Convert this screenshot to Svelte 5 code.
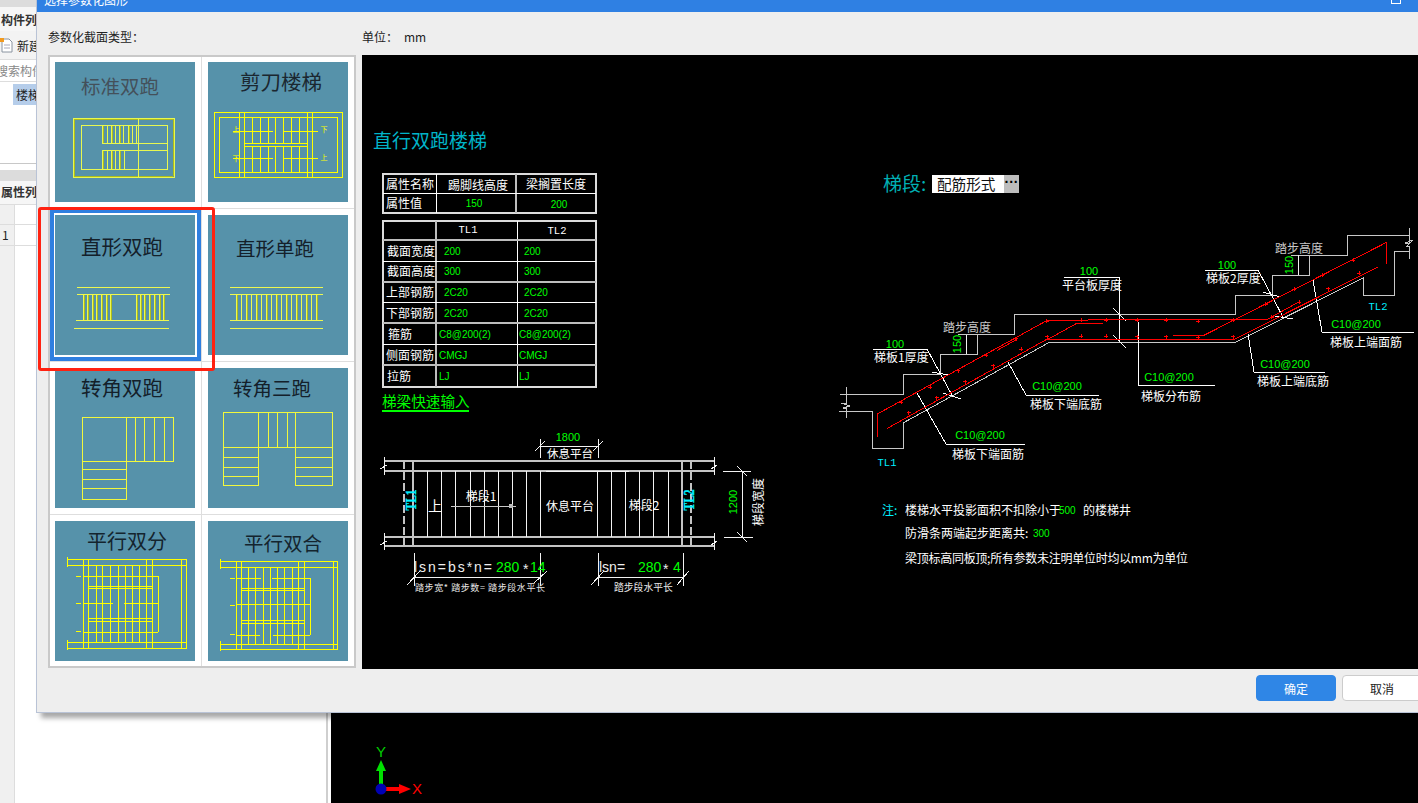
<script lang="ts">
  type Seg = number[];
  interface Thumb {
    title: string;
    tx: number;
    ty: number;
    size: number;
    ink: string;
    stroke: string;
    rects: Seg[];
    lines: Seg[];
    shade?: Seg[];
    marks?: { x: number; y: number; t: string }[];
  }

  const range = (from: number, to: number, step: number) => {
    const out: number[] = [];
    for (let v = from; v <= to + 0.01; v += step) out.push(v);
    return out;
  };
  const vs = (xs: number[], y1: number, y2: number): Seg[] => xs.map((x) => [x, y1, x, y2]);
  const hs = (ys: number[], x1: number, x2: number): Seg[] => ys.map((y) => [x1, y, x2, y]);

  const flightL = [28, 32, 37, 41, 46, 51, 55];
  const flightR = [81, 85, 89, 94, 99, 104, 108];

  const thumbs: Thumb[] = [
    {
      title: "标准双跑", tx: 26, ty: 23, size: 19.5, ink: "#44505a", stroke: "#e8f850",
      rects: [[18, 56, 101, 59], [26, 63, 86, 44]],
      shade: [
        [19, 57, 118, 57], [19, 114, 118, 114], [19, 57, 19, 114], [118, 57, 118, 114],
        ...vs([48, 57, 65, 74], 63, 81),
        ...vs([48, 57, 65], 88, 107)
      ],
      lines: [
        ...vs([47, 52, 56, 60, 64, 68, 73, 77, 81], 63, 81),
        ...vs([47, 52, 56, 60, 64, 69], 88, 107),
        [83, 56, 83, 115],
        ...hs([81, 88], 47, 112)
      ]
    },
    {
      title: "剪刀楼梯", tx: 32, ty: 19, size: 20.5, ink: "#1b2730", stroke: "#ffff00",
      rects: [[6, 50, 128, 65], [11, 55, 118, 55]],
      lines: [
        ...vs([31, 36, 99, 104], 50, 115),
        ...vs([44, 52, 60, 67, 75, 83, 91], 55, 81),
        ...vs([44, 52, 60, 67, 75, 83, 91], 84, 110),
        ...hs([81, 84], 36, 99),
        ...hs([69, 96], 25, 65),
        ...hs([69, 96], 75, 110)
      ],
      marks: [
        { x: 28, y: 67, t: "上" }, { x: 116, y: 67, t: "下" },
        { x: 28, y: 96, t: "下" }, { x: 116, y: 95, t: "上" }
      ]
    },
    {
      title: "直形双跑", tx: 26, ty: 31, size: 20.5, ink: "#14202a", stroke: "#eef850",
      rects: [],
      shade: [...vs(flightL, 79, 105).map((s) => [s[0] + 1, s[1], s[2] + 1, s[3]]), ...vs(flightR, 79, 105).map((s) => [s[0] + 1, s[1], s[2] + 1, s[3]])],
      lines: [
        ...hs([72, 79], 22, 115),
        [21, 105, 114, 105], [19, 113, 114, 113],
        ...vs(flightL, 79, 105),
        ...vs(flightR, 79, 105)
      ]
    },
    {
      title: "直形单跑", tx: 28, ty: 32, size: 19.5, ink: "#14202a", stroke: "#eef850",
      rects: [],
      shade: vs(range(29, 109, 10), 79, 105),
      lines: [...hs([72, 79, 105, 113], 22, 115), ...vs(range(28, 108, 5), 79, 105)]
    },
    {
      title: "转角双跑", tx: 26, ty: 19, size: 20.5, ink: "#14202a", stroke: "#f2f83c",
      rects: [[27, 49, 91, 44], [27, 93, 44, 38]],
      lines: [...vs([71, 80, 89, 99, 109], 49, 93), ...hs([101, 111, 120], 27, 71)]
    },
    {
      title: "转角三跑", tx: 25, ty: 19, size: 19.5, ink: "#14202a", stroke: "#f2f83c",
      rects: [[15, 44, 109, 35], [15, 79, 35, 38], [87, 79, 37, 38]],
      lines: [...vs([50, 60, 69, 79, 87], 44, 79), ...hs([89, 99, 108], 15, 50), ...hs([89, 99, 108], 87, 124)]
    },
    {
      title: "平行双分", tx: 32, ty: 19, size: 20, ink: "#14242e", stroke: "#ffff00",
      rects: [[12, 38, 119, 6], [12, 121, 119, 6]],
      lines: [
        ...vs([28, 33, 91, 97, 126, 131], 38, 127),
        ...vs([41, 47, 55, 63, 70, 77, 84], 44, 121),
        ...hs([55, 111], 28, 103),
        [103, 55, 103, 111],
        ...hs([65, 67, 97, 100], 33, 97),
        [28, 82, 58, 82], [69, 82, 103, 82],
        [21, 55, 26, 55], [21, 82, 26, 82], [21, 110, 26, 110],
        [12, 36, 12, 46], [12, 119, 12, 129]
      ]
    },
    {
      title: "平行双合", tx: 36, ty: 21, size: 19.5, ink: "#14242e", stroke: "#ffff00",
      rects: [[12, 40, 117, 6], [12, 123, 117, 5]],
      lines: [
        ...vs([28, 33, 90, 96, 125, 129], 40, 128),
        ...vs([40, 47, 55, 62, 69, 76, 84], 46, 123),
        [28, 57, 53, 57], [64, 57, 102, 57], [28, 114, 52, 114], [65, 114, 102, 114],
        [102, 57, 102, 114],
        ...hs([67, 69, 99, 102], 33, 96),
        [28, 83, 102, 83],
        [22, 57, 27, 57], [22, 84, 27, 84], [22, 113, 27, 113],
        [12, 38, 12, 48], [12, 120, 12, 130]
      ]
    }
  ];

  const fromZoom5 = (pts: number[]) => pts.map((v, i) => (i % 2 ? 160 + v / 3 : 830 + v / 3)).join(",");
  const fromZoom6 = (pts: number[]) => pts.map((v, i) => (i % 2 ? 210 + v / 3 : 1120 + v / 3)).join(",");

  // section outline, grey
  const outline = [
    "840,394 903,394 903,374 940,374 940,354 977,354 977,334 1014,334 1014,314 1235,314 1235,295 1272,295 1272,275 1309,275 1309,255 1347,255 1347,235 1410,235",
    "839,411 872,411 872,448 903,448 903,423 1050,342 1236,342 1363,278 1363,295 1394,295 1394,251 1410,251",
    "846,387 846,403 841,403 850,406 843,408 846,408 846,418",
    "1409,228 1409,243 1405,243 1413,240 1407,246 1409,246 1409,259",
    "958,334 977,334",
    "1291,255 1309,255"
  ];

  const rebar = [
    fromZoom5([142, 830, 142, 762, 650, 482, 900, 478]),
    "1130,319 1268,319 1297,303",
    fromZoom5([172, 805, 650, 538, 900, 538]),
    "1130,339 1235,339 1378,267",
    fromZoom5([500, 572, 560, 538]),
    fromZoom5([650, 540, 740, 490, 820, 490]),
    fromZoom6([160, 377, 250, 377, 800, 97, 800, 163])
  ];

  const rebarDots = [
    ...[213, 727, 300, 682, 385, 632, 468, 585, 558, 536, 650, 483, 754, 481, 828, 481, 236, 758, 320, 713, 406, 665, 490, 617, 574, 568, 652, 530, 754, 529, 828, 529]
      .reduce((acc: number[][], v, i, a) => (i % 2 ? acc : [...acc, [830 + v / 3, 160 + a[i + 1] / 3]]), []),
    ...[52, 331, 139, 331, 235, 334, 340, 330, 437, 283, 523, 238, 607, 196, 700, 150, 52, 380, 139, 380, 235, 382, 340, 380, 455, 322, 538, 277, 625, 236, 717, 190]
      .reduce((acc: number[][], v, i, a) => (i % 2 ? acc : [...acc, [1120 + v / 3, 210 + a[i + 1] / 3]]), [])
  ];

  const leaders = [
    "873,349 927,349 953,397",
    "932,372 948,375",
    "943,393 961,399",
    "1008,362 1026,395 1099,395",
    "917,393 946,444 1025,444",
    "1064,277 1119,277 1119,342",
    "1113,308 1126,321",
    "1113,335 1126,348",
    "1138,322 1138,385 1215,385",
    "1248,334 1254,372 1325,372",
    "1313,280 1322,332 1414,332",
    "1205,270 1258,270 1283,317",
    "1263,292 1280,297",
    "1275,316 1293,319"
  ];

  const planLong = [461, 471, 537, 546];
  const planTreads = [427, 441, 455, 470, 484, 498, 512, 526, 540, 597, 611, 625, 639, 653, 668];
  const planTicks = [
    [384, 457, 384, 475], [380, 469, 387, 465], [384, 533, 384, 550], [380, 545, 387, 541],
    [714, 457, 714, 475], [711, 469, 717, 465], [714, 533, 714, 550], [711, 545, 717, 541],
    [540, 439, 540, 458], [598, 439, 598, 458], [540, 446, 598, 446],
    [535, 451, 545, 441], [593, 451, 603, 441],
    [723, 471, 751, 471], [724, 537, 753, 537], [742, 471, 742, 537],
    [737, 466, 747, 476], [737, 532, 747, 542],
    [414, 553, 414, 586], [540, 553, 540, 586], [414, 577, 540, 577],
    [407, 585, 420, 571], [534, 583, 547, 571],
    [598, 553, 598, 586], [683, 553, 683, 586], [598, 577, 683, 577],
    [591, 585, 604, 571], [677, 585, 689, 571]
  ];

  const attrRows = [
    { y: 251, label: "截面宽度", lx: 387, a: "200", b: "200", vx: 5 },
    { y: 271, label: "截面高度", lx: 387, a: "300", b: "300", vx: 5 },
    { y: 292, label: "上部钢筋", lx: 386, a: "2C20", b: "2C20", vx: 5 },
    { y: 313, label: "下部钢筋", lx: 386, a: "2C20", b: "2C20", vx: 5 },
    { y: 334, label: "箍筋", lx: 388, a: "C8@200(2)", b: "C8@200(2)", vx: 0 },
    { y: 355, label: "侧面钢筋", lx: 386, a: "CMGJ", b: "CMGJ", vx: 0 },
    { y: 376, label: "拉筋", lx: 387, a: "LJ", b: "LJ", vx: 0 }
  ];

  const labels = [
    { x: 874, y: 356, t: "梯板1厚度" },
    { x: 1030, y: 403, t: "梯板下端底筋" },
    { x: 952, y: 453, t: "梯板下端面筋" },
    { x: 1062, y: 284, t: "平台板厚度" },
    { x: 1141, y: 395, t: "梯板分布筋" },
    { x: 1257, y: 380, t: "梯板上端底筋" },
    { x: 1330, y: 341, t: "梯板上端面筋" },
    { x: 1206, y: 277, t: "梯板2厚度" }
  ];

  const greens = [
    { x: 895, y: 344, t: "100" },
    { x: 1089, y: 271, t: "100" },
    { x: 1227, y: 265, t: "100" },
    { x: 1057, y: 386, t: "C10@200" },
    { x: 980, y: 435, t: "C10@200" },
    { x: 1169, y: 377, t: "C10@200" },
    { x: 1285, y: 364, t: "C10@200" },
    { x: 1356, y: 324, t: "C10@200" }
  ];
</script>

<div class="app">
  <aside class="side">
    <div class="band"></div>
    <div class="panel-title">构件列</div>
    <div class="tool">
      <svg width="14" height="15" viewBox="0 0 14 15">
        <path d="M2 1h7l3 3v10H2z" fill="#fff" stroke="#8a94a0" />
        <path d="M4 7h6M4 10h6" stroke="#aab" />
        <rect x="0" y="0" width="4" height="4" fill="#f29a1f" />
      </svg>
      <span>新建</span>
    </div>
    <div class="search">搜索构件</div>
    <div class="tree">
      <div class="tree-item">楼梯</div>
    </div>
    <div class="band grey"></div>
    <div class="panel-title second">属性列</div>
    <div class="attrs">
      <div class="attr-row"><span class="idx"></span><span class="val"></span></div>
      <div class="attr-row"><span class="idx">1</span><span class="val"></span></div>
      <div class="attr-fill"><span class="idx"></span></div>
    </div>
  </aside>

  <main class="canvas">
    <svg class="axes" width="70" height="60" viewBox="361 743 70 60">
      <rect x="379" y="768" width="4" height="20" fill="#00e000" />
      <path d="M381 760l5 11h-10z" fill="#00e000" />
      <rect x="385" y="787" width="16" height="4" fill="#f00" />
      <path d="M411 789l-12-5v10z" fill="#f00" />
      <circle cx="381" cy="789" r="5.5" fill="#0000b4" />
      <text class="axis-label" x="381" y="757" fill="#00d000" text-anchor="middle">Y</text>
      <text class="axis-label" x="417" y="794" fill="#f00" text-anchor="middle">X</text>
    </svg>
  </main>

  <section class="dialog">
    <header class="dialog-head">
      <span>选择参数化图形</span>
      <span class="win-btn"></span>
    </header>

    <div class="meta">
      <span class="meta-type">参数化截面类型：</span>
      <span class="meta-unit">单位：</span>
      <span>mm</span>
    </div>

    <div class="body">
      <div class="grid">
        {#each thumbs as th, i}
          <div class="cell" class:selected={i === 2}>
            <svg class="thumb" width="140" height="140" viewBox="0 0 140 140" shape-rendering="crispEdges">
              <text class="thumb-title" x={th.tx} y={th.ty} font-size={th.size} fill={th.ink} dominant-baseline="central">{th.title}</text>
              {#each th.shade ?? [] as l}
                <line x1={l[0]} y1={l[1]} x2={l[2]} y2={l[3]} stroke="#aebc1c" />
              {/each}
              {#each th.rects as r}
                <rect x={r[0]} y={r[1]} width={r[2]} height={r[3]} fill="none" stroke={th.stroke} />
              {/each}
              {#each th.lines as l}
                <line x1={l[0]} y1={l[1]} x2={l[2]} y2={l[3]} stroke={th.stroke} />
              {/each}
              {#each th.marks ?? [] as m}
                <text class="thumb-mark" x={m.x} y={m.y} fill={th.stroke} text-anchor="middle" dominant-baseline="central">{m.t}</text>
              {/each}
            </svg>
          </div>
        {/each}
      </div>

      <svg class="cad" width="1070" height="614" viewBox="362 55 1070 614" shape-rendering="crispEdges">
        <text class="zh title" x="373" y="139" dominant-baseline="central">直行双跑楼梯</text>

        <!-- property table -->
        <rect class="tb-outer" x="383" y="174" width="213" height="39" />
        <line class="tb" x1="436" y1="174" x2="436" y2="213" />
        <line class="tb-g" x1="516" y1="174" x2="516" y2="213" />
        <line class="tb" x1="383" y1="193" x2="596" y2="193" />
        <text class="zh w12" x="386" y="183" dominant-baseline="central">属性名称</text>
        <text class="zh w12" x="478" y="184" text-anchor="middle" dominant-baseline="central">踢脚线高度</text>
        <text class="zh w12" x="556" y="183" text-anchor="middle" dominant-baseline="central">梁搁置长度</text>
        <text class="zh w12" x="386" y="202" dominant-baseline="central">属性值</text>
        <text class="num" x="474" y="203" text-anchor="middle" dominant-baseline="central">150</text>
        <text class="num" x="559" y="204" text-anchor="middle" dominant-baseline="central">200</text>

        <!-- beam table -->
        <rect class="tb-outer" x="383" y="221" width="213" height="166" />
        <line class="tb-g" x1="436" y1="221" x2="436" y2="387" />
        <line class="tb" x1="517" y1="221" x2="517" y2="387" />
        {#each [240, 261, 282, 302, 323, 344, 365] as y, i}
          <line class={i % 2 ? "tb" : "tb-g"} x1="383" y1={y} x2="596" y2={y} />
        {/each}
        <text class="mono" x="468" y="230" text-anchor="middle" dominant-baseline="central">TL1</text>
        <text class="mono" x="557" y="231" text-anchor="middle" dominant-baseline="central">TL2</text>
        {#each attrRows as r}
          <text class="zh w12" x={r.lx} y={r.y - 1} dominant-baseline="central">{r.label}</text>
          <text class="num" x={439 + r.vx} y={r.y} dominant-baseline="central">{r.a}</text>
          <text class="num" x={519 + r.vx} y={r.y} dominant-baseline="central">{r.b}</text>
        {/each}
        <text class="zh link" x="382" y="400" dominant-baseline="central">梯梁快速输入</text>
        <rect x="382" y="410" width="87" height="2" fill="#0f0" />

        <!-- plan view -->
        {#each planLong as y}
          <line class="plan" x1="384" y1={y} x2="714" y2={y} />
        {/each}
        <line class="plan" x1="413" y1="461" x2="413" y2="546" />
        <line class="plan" x1="682" y1="461" x2="682" y2="546" />
        <line class="plan dash" x1="404" y1="461" x2="404" y2="546" />
        <line class="plan dash" x1="691" y1="461" x2="691" y2="546" />
        <line class="thin" x1="546" y1="471" x2="629" y2="471" />
        {#each planTreads as x}
          <line class="thin" x1={x} y1="471" x2={x} y2="537" />
        {/each}
        {#each planTicks as t}
          <line class="thin" x1={t[0]} y1={t[1]} x2={t[2]} y2={t[3]} />
        {/each}
        <line class="grey" x1="451" y1="506" x2="516" y2="506" />
        <rect x="509" y="504" width="4" height="4" fill="#bbb" />
        <text class="num big" x="568" y="437" text-anchor="middle" dominant-baseline="central">1800</text>
        <text class="zh w11" x="570" y="453" text-anchor="middle" dominant-baseline="central">休息平台</text>
        <text class="zh w12" x="570" y="505" text-anchor="middle" dominant-baseline="central">休息平台</text>
        <text class="zh w13" x="435" y="505" text-anchor="middle" dominant-baseline="central">上</text>
        <text class="zh w12" x="481" y="495" text-anchor="middle" dominant-baseline="central">梯段1</text>
        <text class="zh w12" x="644" y="504" text-anchor="middle" dominant-baseline="central">梯段2</text>
        <text class="tl" x="411" y="500" text-anchor="middle" dominant-baseline="central" textLength="21" lengthAdjust="spacingAndGlyphs" transform="rotate(-90 411 500)">TL1</text>
        <text class="tl" x="689" y="500" text-anchor="middle" dominant-baseline="central" textLength="21" lengthAdjust="spacingAndGlyphs" transform="rotate(-90 689 500)">TL2</text>
        <text class="num big" x="733" y="502" text-anchor="middle" dominant-baseline="central" transform="rotate(-90 733 502)">1200</text>
        <text class="zh w12" x="757" y="502" text-anchor="middle" dominant-baseline="central" transform="rotate(-90 757 502)">梯段宽度</text>

        <text class="formula" x="414" y="567" dominant-baseline="central" textLength="78">lsn=bs*n=</text>
        <text class="formula g" x="496" y="567" dominant-baseline="central">280</text>
        <text class="formula" x="523" y="569" dominant-baseline="central">*</text>
        <text class="formula g" x="530" y="567" dominant-baseline="central">14</text>
        <text class="formula" x="599" y="567" dominant-baseline="central">lsn=</text>
        <text class="formula g" x="638" y="567" dominant-baseline="central">280</text>
        <text class="formula" x="663" y="569" dominant-baseline="central">*</text>
        <text class="formula g" x="673" y="567" dominant-baseline="central">4</text>
        <text class="zh w9" x="415" y="587" dominant-baseline="central" textLength="130">踏步宽* 踏步数= 踏步段水平长</text>
        <text class="zh w10" x="614" y="587" dominant-baseline="central">踏步段水平长</text>

        <!-- section view -->
        <text class="zh title small" x="883" y="182" dominant-baseline="central">梯段:</text>
        <rect x="932" y="175" width="87" height="18" fill="#fff" />
        <text class="zh combo" x="937" y="183" dominant-baseline="central">配筋形式</text>
        <rect x="1004" y="175" width="15" height="18" fill="#bdbdbd" />
        <text class="dots" x="1011.5" y="182" text-anchor="middle" dominant-baseline="central">···</text>

        {#each outline as p}
          <polyline class="grey" points={p} />
        {/each}
        {#each leaders as p}
          <polyline class="thin white" points={p} />
        {/each}
        {#each rebar as p}
          <polyline class="red" points={p} />
        {/each}
        {#each rebarDots as d}
          <path class="red" d="M{d[0] - 2} {d[1]}h4M{d[0]} {d[1] - 2}v4" />
        {/each}
        <line class="thin" x1="966" y1="335" x2="966" y2="354" />
        <line class="thin" x1="1298" y1="255" x2="1298" y2="275" />
        <text class="zh gr12" x="943" y="326" dominant-baseline="central">踏步高度</text>
        <text class="zh gr12" x="1275" y="247" dominant-baseline="central">踏步高度</text>
        <text class="num big" x="957" y="344" text-anchor="middle" dominant-baseline="central" transform="rotate(-90 957 344)">150</text>
        <text class="num big" x="1289" y="265" text-anchor="middle" dominant-baseline="central" transform="rotate(-90 1289 265)">150</text>
        {#each labels as l}
          <text class="zh w12" x={l.x} y={l.y} dominant-baseline="central">{l.t}</text>
        {/each}
        {#each greens as g}
          <text class="num big" x={g.x} y={g.y} text-anchor="middle" dominant-baseline="central">{g.t}</text>
        {/each}
        <text class="mono cy" x="887" y="463" text-anchor="middle" dominant-baseline="central">TL1</text>
        <text class="mono cy" x="1378" y="307" text-anchor="middle" dominant-baseline="central">TL2</text>

        <!-- notes -->
        <text class="zh note cy" x="882" y="509" dominant-baseline="central">注:</text>
        <text class="zh note" x="905" y="509" dominant-baseline="central">楼梯水平投影面积不扣除小于</text>
        <text class="num" x="1059" y="510" dominant-baseline="central">500</text>
        <text class="zh note" x="1083" y="509" dominant-baseline="central">的楼梯井</text>
        <text class="zh note" x="905" y="532" dominant-baseline="central">防滑条两端起步距离共:</text>
        <text class="num" x="1033" y="533" dominant-baseline="central">300</text>
        <text class="zh note" x="905" y="557" dominant-baseline="central" textLength="283">梁顶标高同板顶;所有参数未注明单位时均以mm为单位</text>
      </svg>
    </div>

    <footer class="foot">
      <button class="btn primary">确定</button>
      <button class="btn">取消</button>
    </footer>
  </section>

  <div class="annotation"></div>
</div>

<style>
  :global(body) {
    overflow: hidden;
    background: #fff;
  }

  .app {
    position: relative;
    display: flex;
    width: 1418px;
    height: 803px;
    overflow: hidden;
    font-family: "Noto Sans CJK SC", "Liberation Sans", sans-serif;
    font-size: 12px;
    color: #222;
  }

  .side {
    display: flex;
    flex-direction: column;
    width: 328px;
    margin-right: 3px;
    border-right: 2px solid #cfcfcf;
    box-sizing: border-box;
    background: #fff;
  }

  .band {
    height: 7px;
    background: #dcdcdc;
  }

  .band.grey {
    flex: none;
    height: 11px;
    margin-top: 6px;
  }

  .panel-title {
    height: 24px;
    line-height: 26px;
    padding-left: 1px;
    font-weight: 700;
    background: #f6f6f6;
    color: #333;
    white-space: nowrap;
  }

  .panel-title.second {
    height: 23px;
    line-height: 22px;
  }

  .tool {
    display: flex;
    align-items: center;
    gap: 3px;
    height: 28px;
    background: #f3f3f3;
  }

  .search {
    height: 21px;
    line-height: 21px;
    border-top: 1px solid #ddd;
    border-bottom: 1px solid #ddd;
    color: #888;
    text-indent: -4px;
    white-space: nowrap;
  }

  .tree {
    flex: none;
    height: 82px;
    padding: 2px 0 0 13px;
    border-bottom: 1px solid #c8c8c8;
    box-sizing: border-box;
  }

  .tree-item {
    height: 21px;
    line-height: 21px;
    padding-left: 3px;
    background: #b5cdea;
  }

  .attrs {
    display: flex;
    flex: 1;
    flex-direction: column;
  }

  .attr-row {
    display: flex;
    height: 20px;
    border-top: 1px solid #ddd;
    line-height: 20px;
  }

  .attr-row:first-child {
    height: 19px;
  }

  .attr-fill {
    display: flex;
    flex: 1;
    border-top: 1px solid #ddd;
  }

  .idx {
    width: 15px;
    background: #f0f0f0;
    border-right: 1px solid #ddd;
    box-sizing: border-box;
    padding-left: 2px;
  }

  .canvas {
    display: flex;
    flex: 1;
    align-items: flex-end;
    padding-left: 30px;
    background: #000;
  }

  .axis-label {
    font-family: "Liberation Sans", sans-serif;
    font-size: 15px;
  }

  .dialog {
    position: absolute;
    top: -20px;
    left: 36px;
    width: 1396px;
    height: 733px;
    border-left: 1px solid #b9c3d6;
    border-bottom: 1px solid #b9c3d6;
    background: #eee;
    box-shadow: 5px 5px 5px rgba(0, 0, 0, 0.35);
    box-sizing: border-box;
  }

  .dialog-head {
    display: flex;
    justify-content: space-between;
    height: 32px;
    padding: 10px 31px 0 7px;
    box-sizing: border-box;
    background: #2f80e3;
    color: #fff;
    line-height: 20px;
  }

  .win-btn {
    width: 8px;
    height: 8px;
    margin-top: 4px;
    border: 1px solid #fff;
  }

  .meta {
    display: flex;
    align-items: center;
    height: 43px;
    padding: 6px 0 0 11px;
    box-sizing: border-box;
  }

  .meta-type {
    width: 314px;
  }

  .meta-unit {
    width: 42px;
  }

  .body {
    display: flex;
    gap: 6px;
    height: 614px;
    padding-left: 11px;
  }

  .grid {
    display: grid;
    grid-template-columns: 151px 152px;
    grid-template-rows: 151px 152px 152px 151px;
    gap: 1px;
    flex: none;
    height: 613px;
    width: 308px;
    border: 2px solid #c9c9c9;
    box-sizing: border-box;
    background: #dedede;
  }

  .cell {
    padding: 6px;
    background: #fff;
    box-sizing: border-box;
  }

  .cell:nth-child(odd) {
    padding-left: 5px;
  }

  .cell:nth-child(-n + 2) {
    padding-top: 5px;
  }

  .cell.selected {
    box-shadow: inset 0 0 0 4px #2f7fe0;
  }

  .thumb {
    display: block;
    background: #5692aa;
  }

  .thumb-title {
    font-family: "Noto Sans CJK SC", sans-serif;
  }

  .thumb-mark {
    font-family: "Noto Sans CJK SC", sans-serif;
    font-size: 7px;
  }

  .cad {
    flex: none;
    display: block;
    background: #000;
  }

  .zh {
    font-family: "Noto Sans CJK SC", sans-serif;
  }

  .title {
    font-size: 19px;
    fill: #00b4c8;
  }

  .title.small {
    fill: #00b0b4;
  }

  .w9 {
    font-size: 9px;
    fill: #e8e8e8;
  }

  .w10 {
    font-size: 9.8px;
    fill: #e8e8e8;
  }

  .w11 {
    font-size: 11.5px;
    fill: #fff;
  }

  .w12 {
    font-size: 12px;
    fill: #fff;
  }

  .w13 {
    font-size: 14px;
    fill: #fff;
  }

  .gr12 {
    font-size: 12px;
    fill: #c8c8c8;
  }

  .link {
    font-size: 14.6px;
    fill: #0f0;
  }

  .num {
    font-family: "Liberation Sans", sans-serif;
    font-size: 10px;
    fill: #0f0;
  }

  .num.big {
    font-size: 11px;
  }

  .mono {
    font-family: "Liberation Mono", monospace;
    font-size: 10.5px;
    fill: #fff;
  }

  .cy {
    fill: #00f0ff;
  }

  .tl {
    font-family: "Liberation Serif", serif;
    font-size: 15px;
    font-weight: 700;
    fill: #00f0ff;
    stroke: #00f0ff;
    stroke-width: 0.4;
  }

  .formula {
    font-family: "Liberation Sans", sans-serif;
    font-size: 14px;
    fill: #eee;
  }

  .formula.g {
    fill: #0f0;
  }

  .combo {
    font-size: 14.6px;
    fill: #111;
  }

  .dots {
    font-family: "Liberation Sans", sans-serif;
    font-size: 14px;
    font-weight: 700;
    fill: #000;
  }

  .note {
    font-size: 12px;
    fill: #fff;
  }

  .note.cy {
    fill: #00f0ff;
  }

  .tb-outer {
    fill: none;
    stroke: #dcdcdc;
    stroke-width: 2;
  }

  .tb {
    stroke: #fff;
    stroke-width: 1;
  }

  .tb-g {
    stroke: #bdbdbd;
    stroke-width: 2;
  }

  .plan {
    stroke: #c4c4c4;
    stroke-width: 2;
  }

  .plan.dash {
    stroke-dasharray: 8 3;
  }

  .thin {
    stroke: #f2f2f2;
    stroke-width: 1;
    fill: none;
  }

  .grey {
    stroke: #c8c8c8;
    stroke-width: 1;
    fill: none;
  }

  .white {
    stroke: #fff;
  }

  .red {
    stroke: #f00;
    stroke-width: 1;
    fill: none;
  }

  .foot {
    display: flex;
    justify-content: flex-end;
    gap: 6px;
    padding: 6px 10px 0 0;
  }

  .btn {
    width: 80px;
    height: 26px;
    padding: 0;
    border: 1px solid #ccc;
    border-radius: 4px;
    background: #fff;
    font: inherit;
    color: #222;
  }

  .btn.primary {
    border-color: #2f86e6;
    background: #2f86e6;
    color: #fff;
  }

  .annotation {
    position: absolute;
    top: 207px;
    left: 38px;
    width: 177px;
    height: 164px;
    border: 3px solid #ff2211;
    border-radius: 3px;
    box-sizing: border-box;
  }
</style>
